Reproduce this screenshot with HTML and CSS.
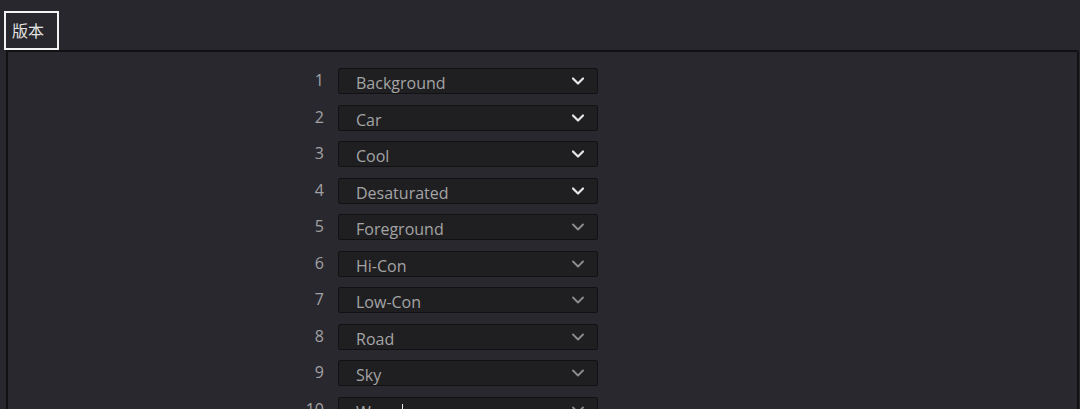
FILE: index.html
```html
<!DOCTYPE html>
<html lang="zh">
<head>
<meta charset="utf-8">
<link rel="stylesheet" href="styles.css">
</head>
<body>
<div class="tab">版本</div>
<div class="panel">
  <div class="list">
    <div class="row"><span class="num">1</span><div class="box"><span class="label">Background</span><svg class="chev on" viewBox="0 0 12 8"><path d="M1 1.5 L6 6.5 L11 1.5"/></svg></div></div>
    <div class="row"><span class="num">2</span><div class="box"><span class="label">Car</span><svg class="chev on" viewBox="0 0 12 8"><path d="M1 1.5 L6 6.5 L11 1.5"/></svg></div></div>
    <div class="row"><span class="num">3</span><div class="box"><span class="label">Cool</span><svg class="chev on" viewBox="0 0 12 8"><path d="M1 1.5 L6 6.5 L11 1.5"/></svg></div></div>
    <div class="row"><span class="num">4</span><div class="box"><span class="label">Desaturated</span><svg class="chev on" viewBox="0 0 12 8"><path d="M1 1.5 L6 6.5 L11 1.5"/></svg></div></div>
    <div class="row"><span class="num">5</span><div class="box"><span class="label">Foreground</span><svg class="chev" viewBox="0 0 12 8"><path d="M1 1.5 L6 6.5 L11 1.5"/></svg></div></div>
    <div class="row"><span class="num">6</span><div class="box"><span class="label">Hi-Con</span><svg class="chev" viewBox="0 0 12 8"><path d="M1 1.5 L6 6.5 L11 1.5"/></svg></div></div>
    <div class="row"><span class="num">7</span><div class="box"><span class="label">Low-Con</span><svg class="chev" viewBox="0 0 12 8"><path d="M1 1.5 L6 6.5 L11 1.5"/></svg></div></div>
    <div class="row"><span class="num">8</span><div class="box"><span class="label">Road</span><svg class="chev" viewBox="0 0 12 8"><path d="M1 1.5 L6 6.5 L11 1.5"/></svg></div></div>
    <div class="row"><span class="num">9</span><div class="box"><span class="label">Sky</span><svg class="chev" viewBox="0 0 12 8"><path d="M1 1.5 L6 6.5 L11 1.5"/></svg></div></div>
    <div class="row"><span class="num">10</span><div class="box"><span class="label">Warm<span class="caret"></span></span><svg class="chev" viewBox="0 0 12 8"><path d="M1 1.5 L6 6.5 L11 1.5"/></svg></div></div>
  </div>
</div>
</body>
</html>
```
FILE: styles.css
```css
html, body {
  margin: 0;
  padding: 0;
  background: #28272d;
  height: 409px;
  overflow: hidden;
  font-family: "Open Sans", "Noto Sans", "Noto Sans CJK SC", sans-serif;
}
.tab {
  margin: 11px 0 0 4px;
  width: 51px;
  height: 35px;
  border: 2px solid #f2f2f2;
  color: #e2e2e2;
  font-size: 16px;
  line-height: 35px;
  text-indent: 6px;
  font-family: "Noto Sans CJK SC", sans-serif;
}
.panel {
  margin-left: 6px;
  width: 1069px;
  height: 357px;
  overflow: hidden;
  border-top: 2px solid #111114;
  border-left: 2px solid #111114;
  border-right: 2px solid #111114;
  border-top-right-radius: 3px;
  background: #29282e;
}
.list {
  display: flex;
  flex-direction: column;
  gap: 10.56px;
  padding-top: 16px;
}
.row {
  display: flex;
  align-items: center;
  height: 26px;
}
.num {
  width: 316px;
  text-align: right;
  color: #a2a2a5;
  font-size: 16px;
  padding-right: 14px;
  line-height: 26px;
  margin-top: -2px;
}
.box {
  width: 228px;
  height: 24px;
  border: 1px solid #121214;
  border-radius: 2px;
  background: #1f1f21;
  display: flex;
  align-items: center;
  justify-content: space-between;
  padding: 0 13px 0 17px;
}
.label {
  color: #a4a4a6;
  font-size: 16px;
  line-height: 24px;
  margin-top: 4px;
}
.caret {
  display: inline-block;
  width: 1px;
  height: 17px;
  background: #e8e8e8;
  vertical-align: -3px;
  margin-left: 1px;
}
.chev {
  width: 12px;
  height: 8px;
  fill: none;
  stroke: #8e8e90;
  stroke-width: 1.8;
  stroke-linecap: round;
  stroke-linejoin: round;
}
.chev.on {
  stroke: #e6e6e6;
  stroke-width: 2.2;
}
```
